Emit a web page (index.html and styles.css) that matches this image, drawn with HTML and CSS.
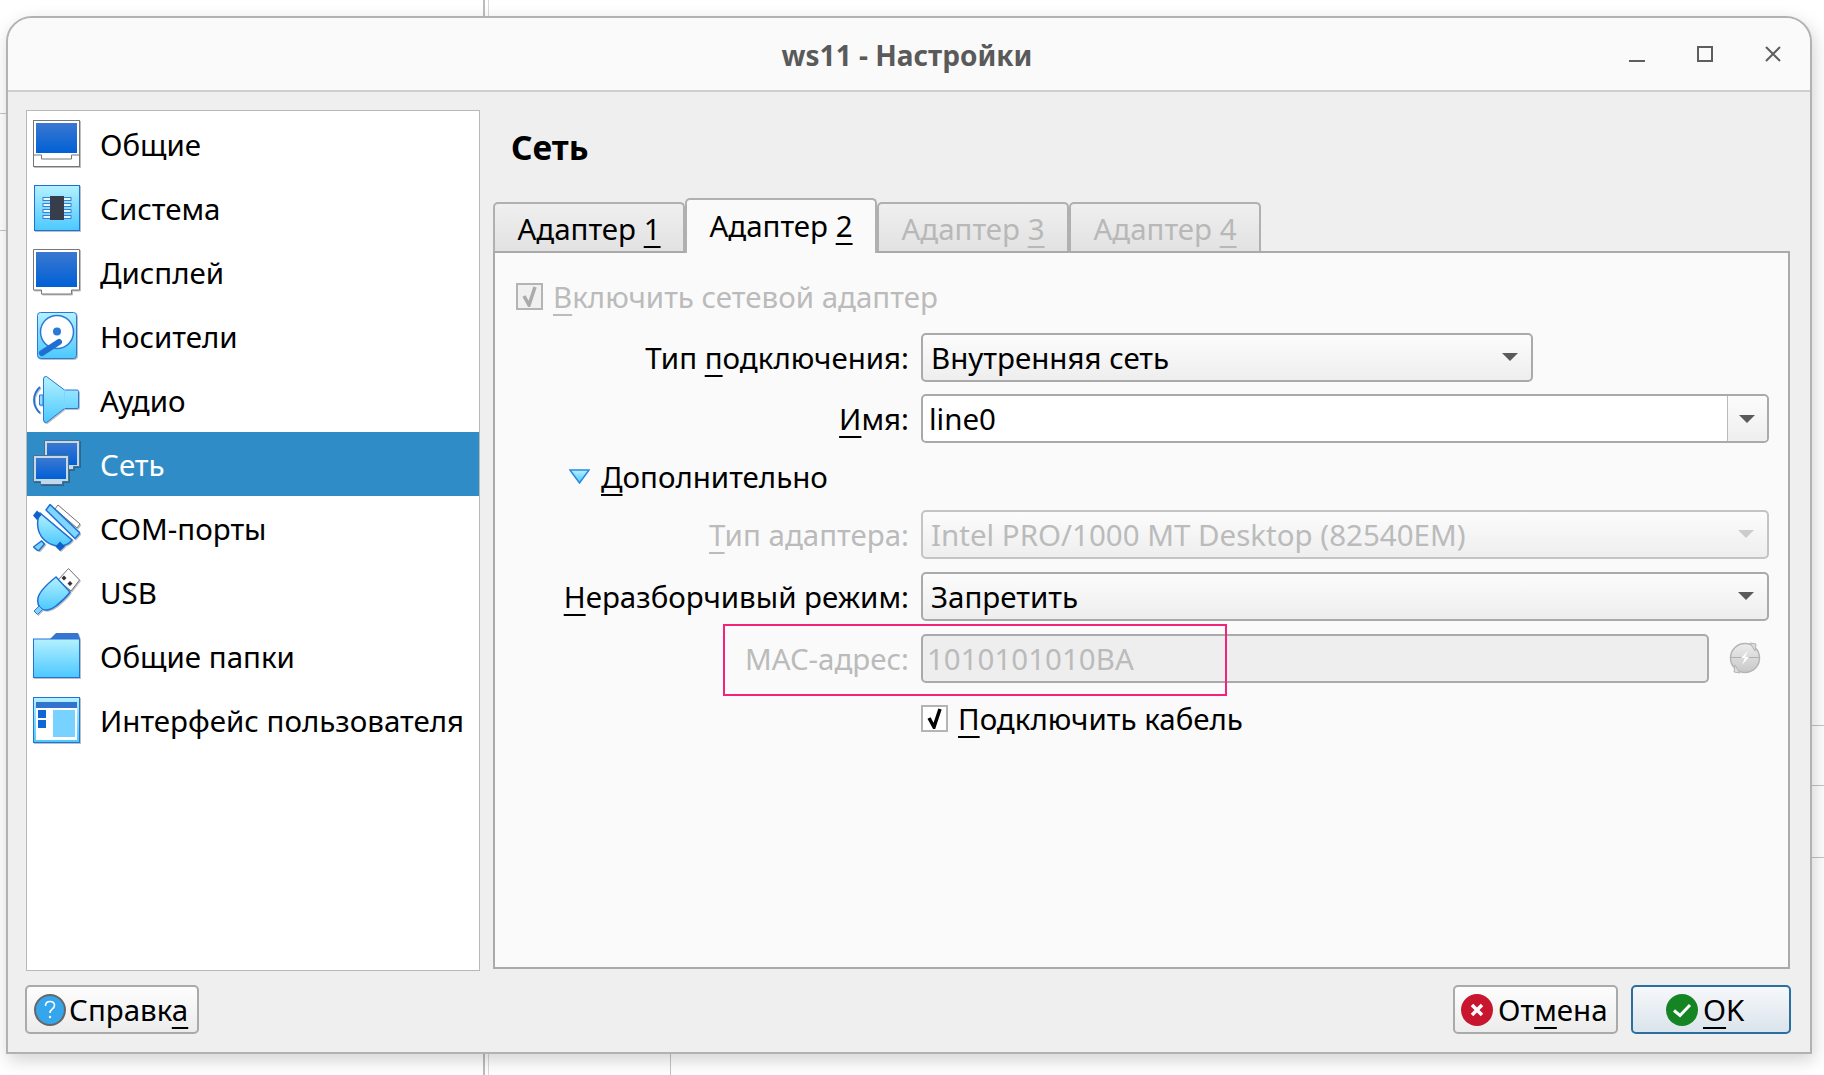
FILE: index.html
```html
<!DOCTYPE html>
<html lang="en">
<head>
    <meta charset="UTF-8">
    <meta name="viewport" content="width=device-width, initial-scale=1.0">
    <title>ws11 - Настройки</title>
    <link rel="stylesheet" href="styles.css">
</head>
<body>

<!-- shared gradients for the icons -->
<svg class="defs" width="0" height="0">
    <defs>
        <linearGradient id="light" x1="0" y1="0" x2="0" y2="1">
            <stop offset="0" stop-color="#b4f1ff"/>
            <stop offset="1" stop-color="#4cc8ff"/>
        </linearGradient>
        <linearGradient id="dark" x1="0" y1="0" x2="0" y2="1">
            <stop offset="0" stop-color="#3b78d0"/>
            <stop offset="1" stop-color="#0060d6"/>
        </linearGradient>
        <linearGradient id="grey" x1="0" y1="0" x2="0" y2="1">
            <stop offset="0" stop-color="#ececec"/>
            <stop offset="1" stop-color="#c8c8c8"/>
        </linearGradient>
    </defs>
</svg>

<!-- bits of the window behind the dialog -->
<div class="behind behind-v1"></div>
<div class="behind behind-v2"></div>
<div class="behind behind-v3"></div>
<div class="behind behind-h1"></div>
<div class="behind behind-h2"></div>
<div class="behind behind-h3"></div>
<div class="behind behind-h4"></div>
<div class="behind behind-h5"></div>

<div class="window">
    <div class="titlebar">
        <span class="title">ws11 - Настройки</span>
        <svg class="wm wm-min" width="16" height="16" viewBox="0 0 16 16"><path d="M0 14h16" stroke="#5e5e5e" stroke-width="2"/></svg>
        <svg class="wm wm-max" width="16" height="16" viewBox="0 0 16 16"><rect x="1" y="1" width="14" height="14" fill="none" stroke="#5e5e5e" stroke-width="2"/></svg>
        <svg class="wm wm-close" width="16" height="16" viewBox="0 0 16 16"><path d="M1 1l14 14M15 1L1 15" stroke="#5e5e5e" stroke-width="2"/></svg>
    </div>

    <div class="content">
        <ul class="sidebar">
            <li>
                <svg class="icon" viewBox="0 0 47 47"><rect x=".5" y=".5" width="46" height="46" fill="#fff" stroke="#777"/><rect x="3" y="3" width="41" height="30" fill="url(#dark)"/><path d="M0 35h8.500v4h30v-4H47" fill="none" stroke="#777"/></svg>
                Общие
            </li>
            <li>
                <svg class="icon" viewBox="0 0 47 47"><rect x="1.500" y="1.500" width="45" height="45" fill="url(#light)" stroke="#1f70d4"/><g fill="#e8f6ff" stroke="#3a7fd6"><rect x="10" y="13.500" width="28" height="3"/><rect x="10" y="19.500" width="28" height="3"/><rect x="10" y="25.500" width="28" height="3"/><rect x="10" y="31.500" width="28" height="3"/></g><rect x="17" y="12" width="14" height="24" fill="#373d4b"/></svg>
                Система
            </li>
            <li>
                <svg class="icon" viewBox="0 0 47 47"><path d="M.5 1.500h46v40.500h-8v4h-30v-4h-8z" fill="#fff" stroke="#777"/><rect x="3" y="4" width="41" height="35" fill="url(#dark)"/></svg>
                Дисплей
            </li>
            <li>
                <svg class="icon" viewBox="0 0 47 47"><rect x="4.500" y=".5" width="39" height="46" rx="3" fill="url(#light)" stroke="#2a78d8"/><circle cx="24" cy="20" r="16.500" fill="#fff" stroke="#2a78d8" stroke-width="1.500"/><circle cx="24" cy="19.500" r="4" fill="#2a78d8"/><path d="M9 41l17-11" stroke="#1f6fd2" stroke-width="6" stroke-linecap="round"/></svg>
                Носители
            </li>
            <li>
                <svg class="icon" viewBox="0 0 47 47"><path d="M7 11C-1 18-1 30 7 37" fill="none" stroke="#1f70d4" stroke-width="1.800"/><path d="M10 19H6.500v10H10z" fill="#8fdcff" stroke="#2a78d8"/><path d="M10.500 3q0-3 3-2.500L31.500 14H44q1.500 0 1.500 1.500v15.500q0 1.500-1.500 1.500H31.500L13.500 46.500q-3 .5-3-2.500z" fill="url(#light)" stroke="#2a78d8"/><path d="M31.500 14v18.500" stroke="#7fd4ff"/></svg>
                Аудио
            </li>
            <li class="active">
                <svg class="icon" viewBox="0 0 47 47"><path d="M11.500 .5h35v26h-6v3h-24v-3h-5z" fill="#c3d8e8" stroke="#4b6f8c"/><rect x="14" y="3" width="30" height="22" fill="url(#dark)"/><path d="M.5 15.500h35v26h-6v3h-22v-3h-7z" fill="#c3d8e8" stroke="#4b6f8c"/><rect x="3" y="18" width="30" height="21" fill="url(#dark)"/></svg>
                Сеть
            </li>
            <li>
                <svg class="icon" viewBox="0 0 47 47"><path d="M25 1l22 19-3 4L22 5z" fill="#fff" stroke="#777"/><path d="M.5 43l8-6 3 3-6 7z" fill="#7fd4ff" stroke="#1f70d4" stroke-width="1.500"/><path d="M7 9l32 27c-5 7-16 8-25 2S2 20 7 9z" fill="url(#light)" stroke="#1f70d4" stroke-width="1.500"/><path d="M17 .5L47 29l-5 5.500L13 6z" fill="#7fd6ff" stroke="#1f70d4" stroke-width="1.500"/><path d="M4 6.500l4.500 4.500-4.500 5-4-4.500zM27 37.500l5 5-5 4.500-4.500-4.500z" fill="#0f62cc"/></svg>
                COM-порты
            </li>
            <li>
                <svg class="icon" viewBox="0 0 47 47"><path d="M35.500 .5L46.500 12 38 23 25 12z" fill="#fff" stroke="#777"/><path d="M23 9l14 15c-3 5-8 9-14 14-5 4-11 5-14 3s-5-6-4-11 8-13 18-21z" fill="url(#light)" stroke="#1f70d4" stroke-width="1.500"/><path d="M1 43l5-5 3.500 3.500-5 5z" fill="#7fd4ff" stroke="#2a78d8"/><path d="M31 7.500l2.500 2.500L31 12.500 28.500 10zM37 13l2.500 2.500L37 18l-2.500-2.500z" fill="#333"/></svg>
                USB
            </li>
            <li>
                <svg class="icon" viewBox="0 0 47 47"><path d="M17 7l6-6h22l2 6z" fill="#3675d0"/><rect x=".5" y="7" width="46" height="38.500" fill="url(#light)" stroke="#2472d6"/></svg>
                Общие папки
            </li>
            <li>
                <svg class="icon" viewBox="0 0 47 47"><rect x=".5" y="1.500" width="46" height="45" fill="url(#light)" stroke="#2472d6"/><rect x="3" y="6" width="41" height="38" fill="#fff"/><rect x="3" y="6" width="41" height="6" fill="#3273d0"/><rect x="5" y="14" width="8" height="8" fill="#0f66d6"/><rect x="5" y="24" width="8" height="8" fill="#0f66d6"/><rect x="20" y="14" width="22" height="27" fill="#78d2ff"/></svg>
                Интерфейс пользователя
            </li>
        </ul>

        <div class="main">
            <h2 class="heading">Сеть</h2>

            <div class="tabs">
                <div class="tab">Адаптер <u>1</u></div>
                <div class="tab selected">Адаптер <u>2</u></div>
                <div class="tab off">Адаптер <u>3</u></div>
                <div class="tab off">Адаптер <u>4</u></div>
            </div>

            <div class="pane">
                <div class="check-row off">
                    <span class="check dim"><svg width="21" height="21" viewBox="0 0 21 21"><path d="M5 10l5 9 6-18" fill="none" stroke="currentColor" stroke-width="3.500"/></svg></span>
                    <span><u>В</u>ключить сетевой адаптер</span>
                </div>

                <div class="form">
                    <div class="row">
                        <label>Тип <u>п</u>одключения:</label>
                        <div class="field combo short">Внутренняя сеть<span class="arrow"></span></div>
                    </div>
                    <div class="row row-name">
                        <label><u>И</u>мя:</label>
                        <div class="field edit"><span class="edit-text">line0</span><span class="drop"><span class="arrow"></span></span></div>
                    </div>
                    <div class="advanced">
                        <svg width="21" height="15" viewBox="0 0 21 15"><path d="M1 1h19L10.500 14z" fill="url(#light)" stroke="#2a88e0" stroke-width="1.500"/></svg>
                        <span><u>Д</u>ополнительно</span>
                    </div>
                    <div class="row off">
                        <label><u>Т</u>ип адаптера:</label>
                        <div class="field combo dis">Intel PRO/1000 MT Desktop (82540EM)<span class="arrow"></span></div>
                    </div>
                    <div class="row">
                        <label><u>Н</u>еразборчивый режим:</label>
                        <div class="field combo">Запретить<span class="arrow"></span></div>
                    </div>
                    <div class="row off mac-row">
                        <label>MAC-адрес:</label>
                        <div class="mac-wrap">
                            <div class="field mac">1010101010BA</div>
                            <svg class="refresh" width="32" height="32" viewBox="0 0 32 32"><circle cx="16" cy="16" r="14.500" fill="url(#grey)" stroke="#b4b4b4" stroke-width="1.500"/><path d="M21 1l6 1-1 7zM11 31l-6-1 1-7z" fill="#dcdcdc" stroke="#b4b4b4"/><path d="M1.500 15.500h29" stroke="#b0b0b0"/><path d="M19 9l-7 7h4l-3 7 7-8h-4z" fill="#fff"/></svg>
                            <div class="highlight"></div>
                        </div>
                    </div>
                    <div class="row row-cable">
                        <span></span>
                        <div class="check-row">
                            <span class="check"><svg width="21" height="21" viewBox="0 0 21 21"><path d="M5 10l5 9 6-18" fill="none" stroke="currentColor" stroke-width="3.500"/></svg></span>
                            <span><u>П</u>одключить кабель</span>
                        </div>
                    </div>
                </div>
            </div>
        </div>
    </div>

    <div class="footer">
        <button class="btn btn-help">
            <svg width="32" height="32" viewBox="0 0 32 32"><circle cx="16" cy="16" r="15" fill="#36a6ec" stroke="#666" stroke-width="2"/><path d="M11.500 12c0-3 2-4.500 4.500-4.500s4.500 1.500 4.500 4c0 3.500-4.500 3.500-4.500 7.500" fill="none" stroke="#fff" stroke-width="1.600"/><circle cx="16" cy="23" r="1.200" fill="#fff"/></svg>
            <span>Справк<u>а</u></span>
        </button>
        <div class="spacer"></div>
        <button class="btn btn-cancel">
            <svg width="32" height="32" viewBox="0 0 32 32"><circle cx="16" cy="16" r="16" fill="#c8162f"/><path d="M11 11l10 10M21 11L11 21" stroke="#fff" stroke-width="3.500"/></svg>
            <span>От<u>м</u>ена</span>
        </button>
        <button class="btn btn-ok">
            <svg width="32" height="32" viewBox="0 0 32 32"><circle cx="16" cy="16" r="16" fill="#148522"/><path d="M8 16.500l6 5L24 11" fill="none" stroke="#fff" stroke-width="3"/></svg>
            <span><u>O</u>K</span>
        </button>
    </div>
</div>

</body>
</html>
```

FILE: styles.css
```css
* {
    box-sizing: border-box;
}
html, body {
    height: 100%;
}
body {
    margin: 0;
    background: #fff;
    overflow: hidden;
    font-family: "Noto Sans", sans-serif;
    font-size: 29.5px;
    color: #000;
}
u {
    text-decoration-thickness: 2px;
    text-underline-offset: 6px;
}
.defs {
    position: absolute;
}

/* window behind the dialog */
.behind {
    position: absolute;
    background: #c4c4c4;
}
.behind-v1 { left: 483px; top: 0; width: 2px; height: 1075px; background: #bdbdbd; }
.behind-v2 { left: 488px; top: 0; width: 1px; height: 1075px; background: #d8d8d8; }
.behind-v3 { left: 670px; top: 1040px; width: 1px; height: 35px; }
.behind-h1 { left: 0; top: 113px; width: 8px; height: 1px; }
.behind-h2 { left: 0; top: 230px; width: 8px; height: 1px; }
.behind-h3 { left: 1808px; top: 725px; width: 16px; height: 1px; }
.behind-h4 { left: 1808px; top: 785px; width: 16px; height: 1px; }
.behind-h5 { left: 1808px; top: 857px; width: 16px; height: 1px; }

.window {
    position: relative;
    margin: 16px 0 0 6px;
    width: 1806px;
    height: 1038px;
    display: flex;
    flex-direction: column;
    background: #efefef;
    border: 2px solid #b2b2b2;
    border-radius: 26px 26px 0 0;
    box-shadow: 2px 6px 18px rgba(0, 0, 0, 0.18);
}
.titlebar {
    position: relative;
    height: 74px;
    flex: none;
    display: flex;
    align-items: center;
    justify-content: center;
    background: #fafafa;
    border-bottom: 2px solid #cfcfcf;
    border-radius: 24px 24px 0 0;
}
.title {
    font-weight: bold;
    font-size: 28px;
    color: #5a5a5a;
    margin-top: 1px;
    margin-left: -4px;
}
.wm {
    position: absolute;
    top: 28px;
}
.wm-min { left: 1621px; top: 29px; }
.wm-max { left: 1689px; }
.wm-close { left: 1757px; }

.content {
    flex: 1;
    display: flex;
    gap: 13px;
    padding: 18px 0 0 18px;
    min-height: 0;
}
.sidebar {
    width: 454px;
    flex: none;
    margin: 0;
    padding: 1px 0 0;
    list-style: none;
    background: #fff;
    border: 1px solid #b8b8b8;
}
.sidebar li {
    height: 64px;
    display: flex;
    align-items: center;
    gap: 20px;
    padding-left: 6px;
}
.sidebar li.active {
    background: #308cc6;
    color: #fff;
}
.icon {
    width: 47px;
    height: 47px;
    flex: none;
    margin-bottom: 2px;
    filter: drop-shadow(1px 1px 0 rgba(0, 0, 0, 0.25));
}

.main {
    width: 1297px;
    display: flex;
    flex-direction: column;
    padding-bottom: 2px;
}
.heading {
    height: 88px;
    margin: 0;
    padding: 12px 0 0 18px;
    font-size: 33.500px;
    line-height: 50px;
    flex: none;
}
.tabs {
    display: flex;
    align-items: flex-end;
    flex: none;
    height: 55px;
    margin-bottom: -2px;
    position: relative;
    z-index: 1;
}
.tab {
    width: 192px;
    height: 49px;
    margin-bottom: 2px;
    padding-top: 2px;
    display: flex;
    align-items: center;
    justify-content: center;
    white-space: pre;
    background: linear-gradient(#efefef, #e2e2e2);
    border: 2px solid #b0b0b0;
    border-bottom: 0;
    border-radius: 5px 5px 0 0;
}
.tab.selected {
    height: 55px;
    margin-bottom: 0;
    padding-top: 0;
    background: #fafafa;
    padding-bottom: 3px;
}
.tab.off {
    color: #b8b8b8;
}
.pane {
    flex: 1;
    background: #fafafa;
    border: 2px solid #aaa;
    padding: 20px 19px 0 21px;
}
.off {
    color: #bbb;
}
.check-row {
    height: 46px;
    display: flex;
    align-items: center;
    gap: 10px;
}
.pane > .check-row {
    margin-bottom: 14px;
}
.check {
    width: 27px;
    height: 27px;
    flex: none;
    display: flex;
    align-items: center;
    justify-content: center;
    background: #fff;
    border: 2px solid #b4b4b4;
    color: #000;
}
.check.dim {
    background: #f0f0f0;
    color: #aaa;
}

.form {
    display: flex;
    flex-direction: column;
    gap: 13px;
}
.row {
    display: grid;
    grid-template-columns: 393px 1fr;
    column-gap: 12px;
    align-items: center;
    height: 49px;
}
.row label {
    text-align: right;
}
.row-name {
    margin-top: -1px;
}
.row-cable {
    margin-top: -2px;
}
.advanced {
    height: 41px;
    margin-left: 53px;
    display: flex;
    align-items: center;
    gap: 11px;
}
.field {
    height: 49px;
    display: flex;
    align-items: center;
    border: 2px solid #aaa;
    border-radius: 5px;
    white-space: nowrap;
}
.combo {
    position: relative;
    padding-left: 8px;
    background: linear-gradient(#fcfcfc, #eeeeee);
}
.combo .arrow {
    position: absolute;
    right: 13px;
    top: 18px;
}
.short {
    width: 612px;
}
.combo.dis {
    border-color: #c4c4c4;
}
.arrow {
    width: 0;
    height: 0;
    border-left: 8px solid transparent;
    border-right: 8px solid transparent;
    border-top: 8px solid #5a5a5a;
}
.dis .arrow {
    border-top-color: #ccc;
}
.edit {
    background: #fff;
}
.edit-text {
    flex: 1;
    padding-left: 6px;
}
.drop {
    width: 40px;
    height: 100%;
    flex: none;
    display: flex;
    align-items: center;
    justify-content: center;
    padding-right: 2px;
    border-left: 1px solid #bbb;
    background: linear-gradient(#fcfcfc, #eeeeee);
    border-radius: 0 4px 4px 0;
}
.mac-wrap {
    position: relative;
    display: flex;
    align-items: center;
    gap: 20px;
}
.mac {
    width: 788px;
    padding-left: 4px;
    background: #eee;
}
.refresh {
    flex: none;
    margin-bottom: 1px;
}
.highlight {
    position: absolute;
    left: -198px;
    top: -10px;
    width: 504px;
    height: 72px;
    border: 2px solid #f0247a;
    pointer-events: none;
}

.footer {
    flex: none;
    display: flex;
    gap: 13px;
    padding: 14px 19px 18px 17px;
}
.spacer {
    flex: 1;
}
.btn {
    height: 49px;
    display: flex;
    align-items: center;
    gap: 5px;
    padding: 0;
    font: inherit;
    color: #000;
    background: linear-gradient(#fdfdfd, #ececec);
    border: 2px solid #aaa;
    border-radius: 5px;
}
.btn-help {
    width: 174px;
    padding-left: 7px;
    gap: 3px;
}
.btn-cancel {
    width: 165px;
    padding-left: 6px;
}
.btn-ok {
    width: 160px;
    padding-left: 33px;
    border-color: #2a6f9f;
    background: linear-gradient(#f6f8fa, #dbe4ec);
}
```
